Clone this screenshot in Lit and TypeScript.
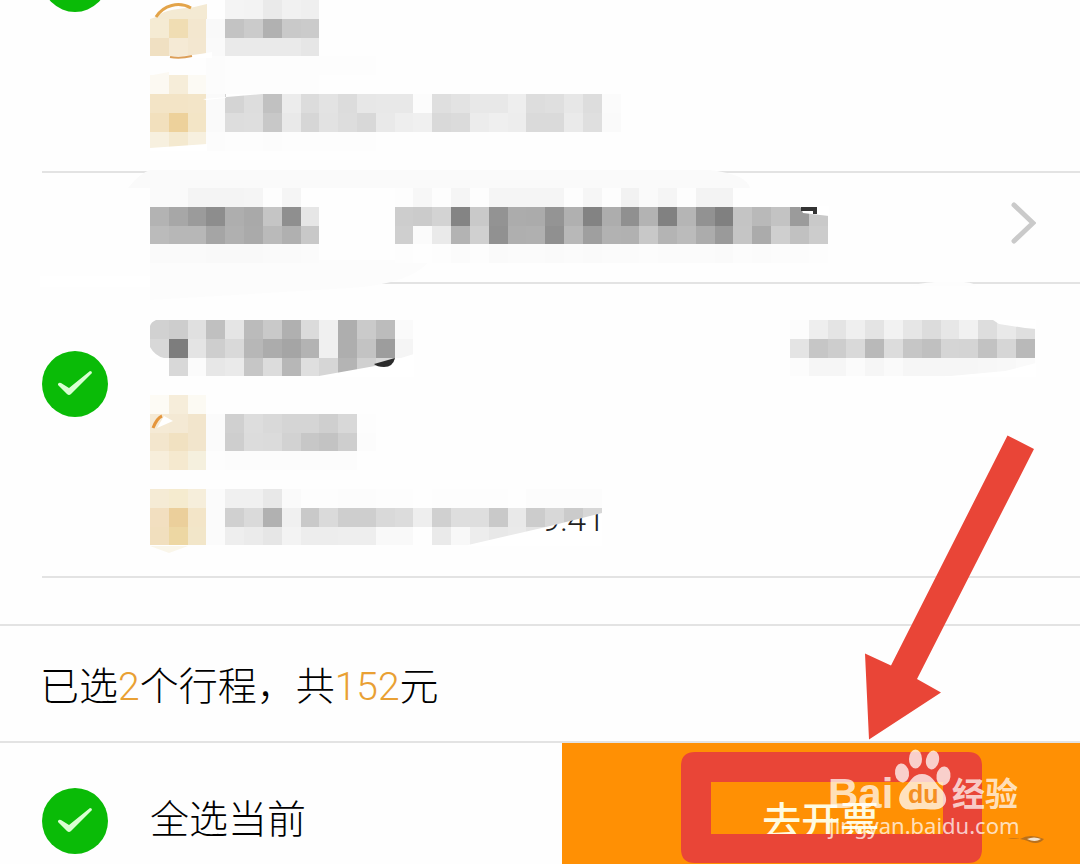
import { LitElement, html, svg, css, SVGTemplateResult } from "lit";
import { customElement, property, state } from "lit/decorators.js";

const CELL = 18.82;

/* Each row lists its cells left to right: two hex digits are a grey,
   six are a full colour, "--" leaves the cell empty. */
function tiles(rows: string[], startCol = 0, startRow = 0): SVGTemplateResult[] {
  const out: SVGTemplateResult[] = [];
  rows.forEach((row, r) => {
    row
      .split(" ")
      .filter(Boolean)
      .forEach((code, c) => {
        if (code === "--") return;
        const fill = "#" + (code.length === 2 ? code.repeat(3) : code);
        const x = Math.round((startCol + c) * CELL);
        const y = Math.round((startRow + r) * CELL);
        const w = Math.round((startCol + c + 1) * CELL) - x;
        const h = Math.round((startRow + r + 1) * CELL) - y;
        out.push(svg`<rect x=${x} y=${y} width=${w} height=${h} fill=${fill}></rect>`);
      });
  });
  return out;
}

const firstTrip = svg`
  ${tiles([
    "-- -- -- -- f4 f3 ea f1 ef",
    "f5ebd3 f0ddb3 f3e7cf f9 c3 cb b1 c9 cb",
    "f0e0c2 f5ead5 f3e7d0 fa ea ea ea ea e6",
    "-- -- -- fc fd fd fd fd fd fd fd fd",
    "fcf9f2 f6edd9 fcfaf4 fc fd fd fd fd fd",
    "f3e4c6 f3e4c6 f3e5c8 fa d4 dd c1 ec dc e3 dc e7 e8 e8 fc df e3 e8 e8 ee dd df e7 dd fb",
    "f2e0bd edd19b f3e5c6 fa dd de c8 e9 d6 e2 dd d8 e9 ee f0 d9 db ec ef ed da da ea df fa",
    "f7f0df f4e9cf f7f0df fc fd fd fc fd fd fd fd fd",
  ])}
  <path d="M0 19 L6 17 Q14 9 40 8 L57 4 V19Z" fill="#f4ead3"></path>
  <path d="M6 17 A26 26 0 0 1 41 8" fill="none" stroke="#e3a44a" stroke-width="3"></path>
  <path d="M18 57 Q42 56 62 52 V58 H18Z" fill="#fff"></path>
  <path d="M20 57 Q30 59 42 56" fill="none" stroke="#dc9f58" stroke-width="2"></path>
  <path d="M0 75 H3 L19 72 V75Z" fill="#fcf9f2"></path>
  <path d="M0 148 L57 144 V151 H0Z" fill="#fff"></path>
  <path d="M53 99 L112 94 H76 V98 L56 100Z" fill="#fff"></path>
`;

const orderHeader = svg`
  <path d="M-22 0 Q-10 -15 0 -18 L560 -18 Q596 -14 600 0Z" fill="#fafafa"></path>
  <path d="M0 72 H280 Q262 96 200 100 L0 112Z" fill="#fcfcfc"></path>
  <path d="M-110 88 H0 V99 H-110Z" fill="#fff"></path>
  <path d="M760 98 Q780 93 800 94 Q822 93 826 98Z" fill="#fdfdfd"></path>
  ${tiles(["fa fa f4 f4 f4 f5 fd f5"])}
  ${tiles(["fd f7 fd f5 fd f5 f5 f5 f5 fd f6 fd f2 fa f5 fd f3 f3"], 13)}
  ${tiles(["b3 a7 9b 8d ae a9 c5 8f e6", "bb b7 b7 a5 b0 aa ba b0 c8", "fa fa fa f9 f9 f9 fa fa fb"], 0, 1)}
  ${tiles(
    [
      "cd cb d3 84 c9 93 ac ab 94 b0 83 ad 90 b3 81 b5 92 80 c4 b9 c3 9b c9",
      "cf fb ea b3 d0 91 af b0 90 b8 9f b2 b1 c8 b4 bb ac 9a c5 ab cf c1 cc",
      "fd fe fd fb fd fa fb fb fa fb fa fb fb fc fb fb fb fa fc fb fc fc fd",
    ],
    13,
    1
  )}
  <path d="M650 18 H679 V28 L653 25Z" fill="#fff"></path>
  <path d="M651 21 H665 V26" fill="none" stroke="#333" stroke-width="4"></path>
`;

const secondTitle = svg`
  ${tiles([
    "d1 cd e0 c0 e5 bb c9 b0 db f0 ae ca bc fa",
    "d8 7d e4 ce d9 b7 ac a5 b3 f0 ae c3 9d f5",
    "fe d8 fb e7 ea c6 dc b7 df d6 b4 d0 d8",
  ])}
  <path d="M0 0 H6 Q1 2 0 6Z M0 27 Q5 36 14 38 H0Z" fill="#fff"></path>
  <path d="M169 56 L225 46 L264 34 V57 H169Z" fill="#fff"></path>
  <path d="M224 44 L245 38 Q243 47 234 47 Q227 47 224 44Z" fill="#2b2b2b"></path>
`;

const secondPrice = svg`
  ${tiles([
    "fc ee e4 ef e4 f2 e6 dc e7 f1 dd e9 df",
    "e4 c6 cd d9 b9 dc c6 c0 d5 d4 c2 d6 b9",
    "fc f6 f6 fb f6 fa f6 f6 f6 f6 f7 f8 fa",
  ])}
  <path d="M203 0 L209 4 L235 8 L246 9 V0Z" fill="#fff"></path>
  <path d="M150 57 L215 51 L246 43 V57Z" fill="#fff"></path>
`;

const secondFrom = svg`
  ${tiles([
    "fdfbf5 f6edda fcfaf3",
    "f5ead5 f4e9d4 f2e5cc fb d0 dd d9 d5 d5 cf d8 fd",
    "f3e6cd f1e1c1 f2e5cc fb ce dc db d2 c7 c3 ce fc",
    "f7eedb f5e9cf f5f0de fd fc fc fc fc fc fc fc",
  ])}
  <path d="M7 33 L14 21 L23 26 Z" fill="#fff"></path>
  <path d="M3 33 Q7 23 12 21" fill="none" stroke="#e5963c" stroke-width="3"></path>
`;

const secondTo = svg`
  ${tiles([
    "f5ebd5 f5ebcf f6eedb fb f0 f0 e8 fa fd fd fc fc fd fd fe fd fd fd fd fe fc fc fc fc",
    "f2dfc0 ebcf9b f3e5c8 fb d0 da b1 f0 c9 da ce ce d9 dc ee d0 de de c9 e9 cc d8 cb d7",
    "f1dfbe edd7a3 f2e6c9 fb ee eb e6 f3 ed ed ee ee f9 f9 fe ea f8 ed e8 ea e4 e0",
  ])}
  <path d="M0 57 H38 L19 64Z" fill="#faf6ea"></path>
  <path d="M318 56 L396 38 L452 24 V57 H318Z" fill="#fff"></path>
  <clipPath id="below"><path d="M318 56 L396 38 L452 24 L470 24 V60 H318Z"></path></clipPath>
  <text class="time" x="455" y="42" text-anchor="end" clip-path="url(#below)">9:41</text>
`;

const mosaic = (width: number, height: number, body: SVGTemplateResult) => html`
  <svg class="mosaic" width=${width} height=${height} viewBox="0 0 ${width} ${height}" aria-hidden="true">
    ${body}
  </svg>
`;

@customElement("round-check")
export class RoundCheck extends LitElement {
  @property() label = "";
  @property({ type: Boolean }) checked = true;

  static styles = css`
    :host {
      display: block;
      flex: none;
    }
    .box {
      display: grid;
      width: 66px;
      height: 66px;
      cursor: pointer;
    }
    .input,
    .mark {
      grid-area: 1 / 1;
      width: 66px;
      height: 66px;
    }
    .input {
      appearance: none;
      margin: 0;
      border-radius: 50%;
      border: 2px solid #c8c8c8;
      background: #fff;
    }
    .input:checked {
      border: 0;
      background: #0abb07;
    }
    .mark {
      pointer-events: none;
    }
  `;

  render() {
    return html`
      <label class="box">
        <input
          class="input"
          type="checkbox"
          aria-label=${this.label}
          .checked=${this.checked}
          @change=${(e: Event) => (this.checked = (e.target as HTMLInputElement).checked)}
        />
        <svg class="mark" viewBox="0 0 66 66" aria-hidden="true">
          <path
            d="M16 33 Q17 31 19 32 L27 37 L48 20 Q50 20 50 22 L29 43 Q27 45 25 43 L16 34Z"
            fill="#d9ffd2"
          ></path>
        </svg>
      </label>
    `;
  }
}

@customElement("app-root")
export class AppRoot extends LitElement {
  @state() private count = 2;
  @state() private total = 152;

  static styles = css`
    :host {
      display: block;
      font-family: "Noto Sans CJK SC", "Noto Sans", sans-serif;
      font-weight: 300;
      font-size: 39px;
      line-height: 56px;
      color: #000;
    }
    .page {
      position: relative;
      display: flex;
      flex-direction: column;
      height: 100vh;
      overflow: hidden;
      background: #fefefe;
    }
    .list {
      flex: 1;
      min-height: 0;
      display: flex;
      flex-direction: column;
      justify-content: flex-end;
      overflow: hidden;
      padding: 0 0 46px 42px;
    }
    .trip,
    .order {
      flex: none;
      display: flex;
      border-bottom: 2px solid #e3e3e3;
    }
    .trip {
      gap: 42px;
      min-height: 292px;
      box-sizing: content-box;
    }
    .check {
      margin-top: 67px;
    }
    .details {
      flex: 1;
      display: flex;
      flex-direction: column;
      gap: 19px;
      padding: 36px 44px 31px 0;
    }
    .details.cut {
      justify-content: flex-end;
      padding: 0 44px 20px 0;
    }
    .title {
      display: flex;
      justify-content: space-between;
    }
    .order {
      justify-content: space-between;
      align-items: flex-start;
      padding: 15px 44px 18px 108px;
      color: inherit;
      text-decoration: none;
    }
    .mosaic {
      display: block;
      flex: none;
      overflow: visible;
    }
    .chevron {
      margin-top: 14px;
    }
    .time {
      font: 300 34px Roboto, "Liberation Sans", sans-serif;
      fill: #222;
    }
    .summary {
      margin: 0;
      padding: 29px 40px 30px;
      border-top: 2px solid #e3e3e3;
      border-bottom: 2px solid #e3e3e3;
    }
    .number {
      font-family: Roboto, "Liberation Sans", sans-serif;
      line-height: 1;
      color: #e9a033;
    }
    .bar {
      display: grid;
      grid-template-columns: 52fr 48fr;
    }
    .all {
      display: flex;
      align-items: flex-start;
      gap: 42px;
      padding: 45px 0 10px 42px;
    }
    .go {
      min-width: 0;
      border: 0;
      margin: 0;
      padding: 29px 0 0;
      background: #ff9004;
      color: #fffbe0;
      font: inherit;
      font-weight: 500;
      cursor: pointer;
    }
    .notes {
      position: absolute;
      right: 0;
      bottom: 0;
      pointer-events: none;
    }
    .brand {
      font: 700 42px "Liberation Sans", sans-serif;
    }
    .brand-du {
      font: 700 25px "Liberation Sans", sans-serif;
    }
    .brand-cn {
      font: 700 33px "Noto Sans CJK SC", sans-serif;
    }
    .brand-url {
      font: 400 22px "Noto Sans", sans-serif;
    }
  `;

  render() {
    return html`
      <div class="page">
        <main class="list">
          <article class="trip">
            <round-check class="check" label="行程 1"></round-check>
            <div class="details cut">${mosaic(470, 151, firstTrip)}</div>
          </article>
          <a class="order" href="#order" aria-label="行程">
            ${mosaic(678, 76, orderHeader)}
            <svg class="chevron" width="26" height="42" viewBox="0 0 26 42" aria-hidden="true">
              <path d="M4 3 L23 21 L4 39" fill="none" stroke="#cacaca" stroke-width="5" stroke-linecap="round"></path>
            </svg>
          </a>
          <article class="trip">
            <round-check class="check" label="行程 2"></round-check>
            <div class="details">
              <div class="title">${mosaic(264, 56, secondTitle)} ${mosaic(246, 56, secondPrice)}</div>
              ${mosaic(226, 75, secondFrom)} ${mosaic(470, 56, secondTo)}
            </div>
          </article>
        </main>
        <p class="summary">
          已选<span class="number">${this.count}</span>个行程，共<span class="number">${this.total}</span>元
        </p>
        <footer class="bar">
          <div class="all">
            <round-check label="全选当前"></round-check>
            <span>全选当前</span>
          </div>
          <button class="go" type="button">去开票</button>
        </footer>
        <svg class="notes" width="400" height="434" viewBox="680 430 400 434" aria-hidden="true">
          <path
            d="M1007.5 435.5 L1034 449 L917 679 L941 692.5 L869 739.5 L865 653.5 L891 665.5Z"
            fill="#e94537"
          ></path>
          <path
            fill-rule="evenodd"
            d="M695 752 H968 Q982 752 982 766 V849 Q982 863 968 863 H695 Q681 863 681 849 V766 Q681 752 695 752Z M711 782 V834 H943 V782Z"
            fill="#e94537"
          ></path>
          <path d="M1008 839 Q1013 837 1020 839 Q1030 833 1044 839 Q1039 845 1030 842 Q1022 838 1008 839Z" fill="#b9701c"></path>
          <path d="M1027 839 Q1034 836 1041 839 Q1035 843 1027 839Z" fill="#f3e4d2"></path>
          <g fill="#fff" fill-opacity="0.74">
            <text class="brand" x="828" y="808">Bai</text>
            <ellipse cx="902" cy="773" rx="7" ry="9.5" transform="rotate(-8 902 773)"></ellipse>
            <ellipse cx="915.5" cy="759" rx="6.5" ry="9.5"></ellipse>
            <ellipse cx="932.5" cy="760" rx="6.5" ry="9.5" transform="rotate(12 932.5 760)"></ellipse>
            <ellipse cx="943.5" cy="776" rx="7" ry="9.5" transform="rotate(8 943.5 776)"></ellipse>
            <path
              d="M922 774 C931 774 934 781 939 787 C945 792 948 799 945 804 C940 812 931 809 922 809 C914 809 905 812 901 805 C897 799 900 792 905 787 C911 781 913 774 922 774Z"
            ></path>
            <text class="brand-cn" x="952" y="806">经验</text>
            <text class="brand-url" x="829" y="834">jingyan.baidu.com</text>
          </g>
          <text class="brand-du" x="908" y="803" fill="#f58f22">du</text>
        </svg>
      </div>
    `;
  }
}
